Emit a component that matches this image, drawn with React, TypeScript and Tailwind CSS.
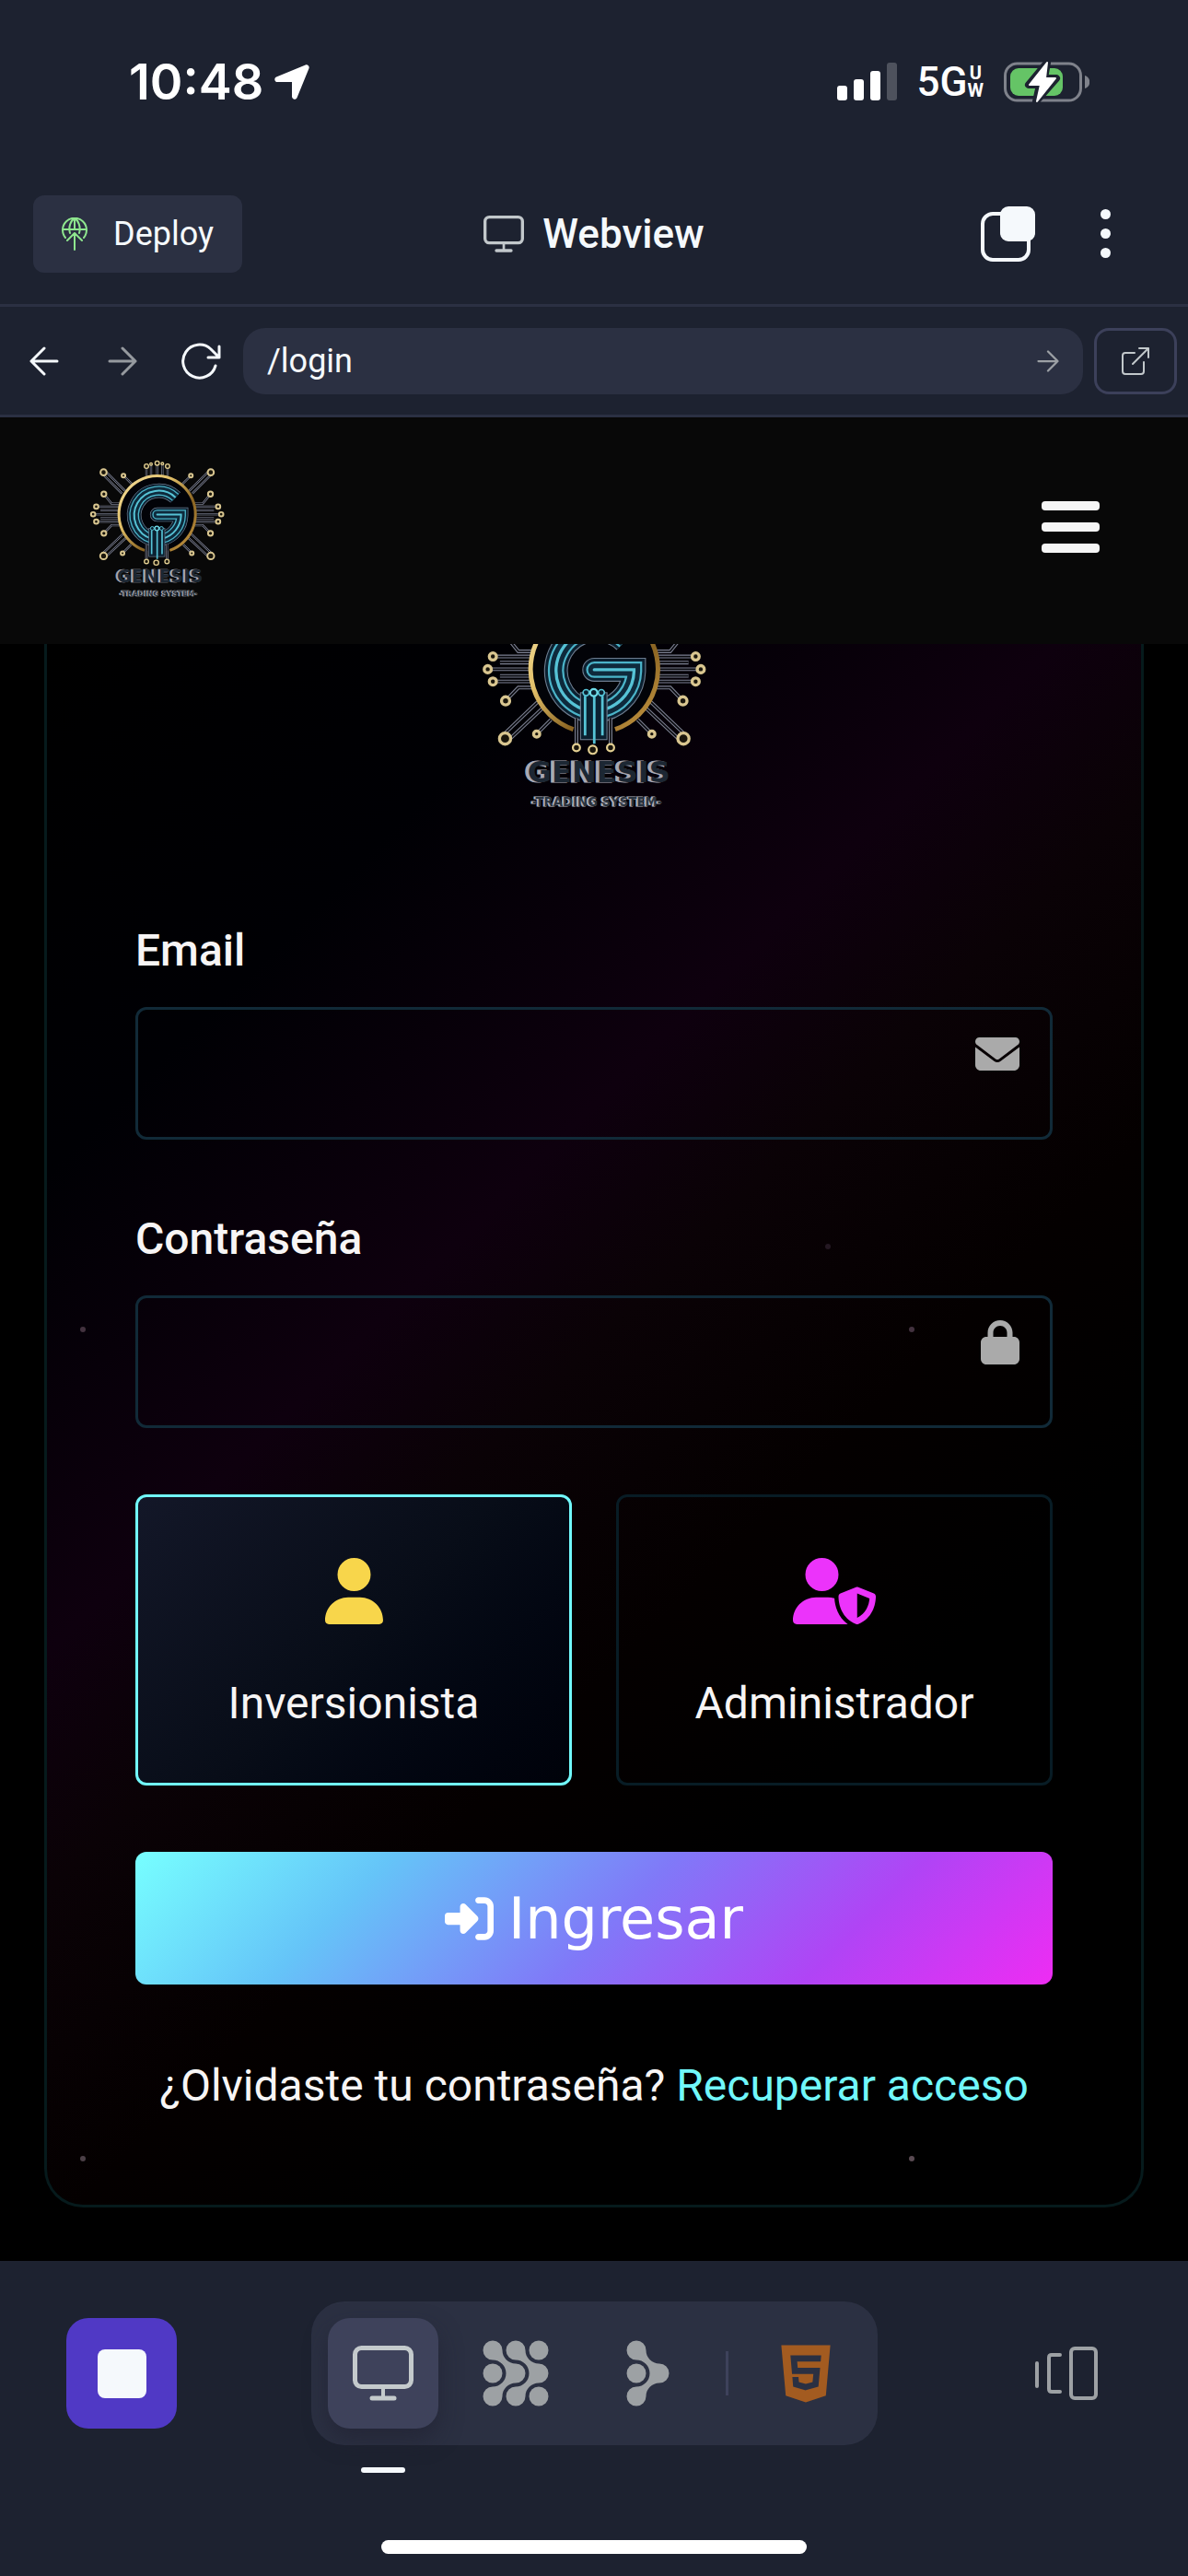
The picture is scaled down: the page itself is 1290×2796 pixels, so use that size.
import { useId, useState } from "react";
import type { ReactNode } from "react";
import { FaEnvelope, FaHtml5, FaLocationArrow, FaLock, FaRightToBracket, FaUser, FaUserShield } from "react-icons/fa6";

const SIDE_NODES = [
  [156, 129, 10],
  [221, 140, 6],
  [157, 200, 8],
  [132, 241, 7],
  [122, 266, 7],
  [132, 290, 7],
  [157, 328, 8],
  [156, 402, 11],
  [218, 393, 6],
];

const SIDE_TRACES = [
  "M158 121L226 189",
  "M152 134L216 198",
  "M221 140L250 169",
  "M157 200L182 231H208",
  "M132 241H206",
  "M146 253H206",
  "M122 266H203",
  "M146 279H206",
  "M132 290H206",
  "M157 328L182 302H208",
  "M151 396L220 330",
  "M162 406L232 340",
  "M218 393L246 365",
];

const CENTER_NODES = [
  [296, 109, 7],
  [311, 102, 4],
  [331, 99, 7],
  [348, 101, 4],
  [365, 109, 7],
  [296, 420, 7],
  [328, 424, 8],
  [363, 420, 7],
];

const CENTER_TRACES = ["M296 112V142", "M311 104V140", "M331 103V138", "M348 103V140", "M365 112V142", "M296 360V414", "M363 360V414"];

function Trace({ d }: { d: string }) {
  return (
    <>
      <path d={d} stroke="#7b7f90" strokeWidth="7" />
      <path d={d} stroke="#08090d" strokeWidth="3" />
    </>
  );
}

function Neon({ d, cap }: { d: string; cap: "round" | "butt" }) {
  return (
    <g strokeLinecap={cap} strokeLinejoin="miter">
      <path d={d} stroke="#6d7c8f" strokeWidth="47" />
      <path d={d} stroke="#0b2030" strokeWidth="43" />
      <path d={d} stroke="#4bb4c9" strokeWidth="32" />
      <path d={d} stroke="#0e2a3c" strokeWidth="24" />
      <path d={d} stroke="#56c3d6" strokeWidth="6" />
    </g>
  );
}

function GenesisLogo({ className }: { className: string }) {
  const gold = useId();
  const side = (
    <>
      {SIDE_TRACES.map((d) => (
        <Trace key={d} d={d} />
      ))}
      {SIDE_NODES.map(([x, y, r]) => (
        <circle key={`${x}-${y}`} cx={x} cy={y} r={r} fill="#1a160c" stroke="#d9c690" strokeWidth="6" />
      ))}
    </>
  );
  return (
    <svg viewBox="110 85 441 460" className={className} fill="none" role="img" aria-label="Genesis Trading System">
      <defs>
        <linearGradient id={gold} x1="0" y1="0" x2="1" y2="1">
          <stop offset="0" stopColor="#f3dfa0" />
          <stop offset="0.35" stopColor="#e2c069" />
          <stop offset="0.65" stopColor="#8a6422" />
          <stop offset="1" stopColor="#c99a45" />
        </linearGradient>
      </defs>
      {side}
      <g transform="translate(662 0) scale(-1 1)">{side}</g>
      {CENTER_TRACES.map((d) => (
        <Trace key={d} d={d} />
      ))}
      <circle cx="331" cy="266" r="124" fill="#020308" />
      <path d="M290 384A125 125 0 1 1 372 384" stroke={`url(#${gold})`} strokeWidth="9" />
      <Neon d="M391 211A80 80 0 1 0 314 346" cap="butt" />
      <Neon d="M331 267H409V270A80 80 0 0 1 350 345" cap="round" />
      <rect x="304" y="312" width="52" height="92" fill="#0b2030" stroke="#6d7c8f" strokeWidth="2" />
      <path d="M313 318V396M331 318V412M347 318V396" stroke="#56c3d6" strokeWidth="5" />
      <circle cx="315" cy="312" r="6" fill="#0b2030" stroke="#56c3d6" strokeWidth="3" />
      <circle cx="345" cy="312" r="6" fill="#0b2030" stroke="#56c3d6" strokeWidth="3" />
      <circle cx="330" cy="312" r="7" fill="#0b2030" stroke="#6fdbe8" strokeWidth="4" />
      <path d="M296 362V414M363 362V414" stroke="#7b7f90" strokeWidth="7" />
      <path d="M296 362V414M363 362V414" stroke="#08090d" strokeWidth="3" />
      {CENTER_NODES.map(([x, y, r]) => (
        <circle key={`${x}-${y}`} cx={x} cy={y} r={r} fill="#1a160c" stroke="#e3cf92" strokeWidth="4" />
      ))}
      <g fontFamily="'DejaVu Sans', sans-serif" fontWeight="700" textAnchor="middle">
        <text x="334" y="488" fontSize="58" fill="#a9aab4" stroke="#a9aab4" strokeWidth="2">
          GENESIS
        </text>
        <text x="340" y="487" fontSize="58" fill="#1c2733">
          GENESIS
        </text>
        <text x="334" y="534" fontSize="24" fill="#b0b1ba" stroke="#b0b1ba" strokeWidth="2">
          -TRADING SYSTEM-
        </text>
        <text x="337" y="534" fontSize="24" fill="#2a3440">
          -TRADING SYSTEM-
        </text>
      </g>
    </svg>
  );
}

function MonitorIcon({ className }: { className: string }) {
  return (
    <svg viewBox="0 0 66 60" className={className} fill="none" stroke="currentColor" strokeWidth="5" aria-hidden="true">
      <rect x="2.5" y="2.5" width="61" height="42" rx="7" />
      <path d="M33 45V56" strokeWidth="4" />
      <path d="M21 57H45" strokeLinecap="round" />
    </svg>
  );
}

function ArrowIcon({ className }: { className: string }) {
  return (
    <svg viewBox="0 0 32 32" className={className} fill="none" stroke="currentColor" strokeWidth="3" strokeLinecap="round" strokeLinejoin="round" aria-hidden="true">
      <path d="M2 16H30M16 2L30 16L16 30" />
    </svg>
  );
}

const CHEVRON =
  "M11 .5A10.5 10.5 0 0 1 21.5 11C21.5 19 28 25.5 36 25.5A10.5 10.5 0 0 1 36 46.5C28 46.5 21.5 53 21.5 61A10.5 10.5 0 1 1 11 50.5A14.5 14.5 0 0 0 11 21.5A10.5 10.5 0 0 1 11 .5Z";

function StatusBar() {
  return (
    <div className="flex h-[177px] items-center justify-between pl-[140px] pr-[107px] text-white">
      <div className="flex items-center gap-2">
        <span className="font-['Inter',sans-serif] text-[54px] leading-none font-semibold">10:48</span>
        <FaLocationArrow className="size-[46px]" aria-hidden="true" />
      </div>
      <div className="flex items-center gap-[22px]">
        <svg viewBox="0 0 65 41" className="h-[41px] w-[65px]" fill="currentColor" aria-hidden="true">
          <rect y="25" width="11" height="16" rx="3" />
          <rect x="18" y="18" width="11" height="23" rx="3" />
          <rect x="36" y="9" width="11" height="32" rx="3" />
          <rect x="54" width="11" height="41" rx="3" opacity="0.22" />
        </svg>
        <div className="flex items-center font-['Roboto',sans-serif] font-medium">
          <span className="text-[44px] leading-none">5G</span>
          <span className="flex flex-col text-center font-['Roboto',sans-serif] text-[20px] leading-[19px] font-bold">
            <span>U</span>
            <span>W</span>
          </span>
        </div>
        <svg viewBox="0 0 93 46" className="h-[46px] w-[93px]" fill="none" aria-hidden="true">
          <rect x="1.5" y="3" width="82" height="40" rx="13" stroke="#7f828b" strokeWidth="3" />
          <path d="M88 16C95 18 95 28 88 30Z" fill="#7f828b" />
          <rect x="7" y="8" width="57" height="30" rx="9" fill="#65c466" />
          <path d="M47 2L27 26H39L35 44L57 19H44Z" fill="#fff" stroke="#1d2230" strokeWidth="8" strokeLinejoin="round" />
          <path d="M47 2L28 26H40L36 44L56 19H45Z" fill="#fff" stroke="#fff" strokeWidth="2" strokeLinejoin="round" />
        </svg>
      </div>
    </div>
  );
}

function TitleBar() {
  return (
    <div className="grid h-[156px] grid-cols-[1fr_auto_1fr] items-center border-b-3 border-[#2b3043] pr-[84px] pl-9 text-[#f5f9fc]">
      <button className="flex h-[84px] items-center gap-7 justify-self-start rounded-xl bg-[#2b3042] pr-[31px] pl-[31px] text-4xl">
        <svg viewBox="0 0 28 36" className="h-9 w-7" fill="none" stroke="#8ee68e" strokeWidth="2" strokeLinecap="round" strokeLinejoin="round" aria-hidden="true">
          <path d="M4 22A13 13 0 1 1 24 22M1 13H27" />
          <path d="M9 17C7 10 10 3 14 1C18 3 21 10 19 17" />
          <path d="M14 1V13M14 35V18M6 25L14 17L22 25" />
        </svg>
        Deploy
      </button>
      <h1 className="-mr-12 flex items-center gap-5 text-[44px] font-medium">
        <MonitorIcon className="h-10 w-11 text-[#c2c8cb]" />
        Webview
      </h1>
      <div className="flex items-center gap-[71px] justify-self-end">
        <button aria-label="Pestañas">
          <svg viewBox="0 0 60 60" className="size-[60px]" fill="none" aria-hidden="true">
            <rect x="3" y="8" width="50" height="50" rx="11" stroke="currentColor" strokeWidth="4" />
            <rect x="22" width="38" height="38" rx="9" fill="currentColor" />
          </svg>
        </button>
        <button aria-label="Más opciones" className="flex flex-col gap-[10px]">
          <span className="size-[11px] rounded-full bg-current" />
          <span className="size-[11px] rounded-full bg-current" />
          <span className="size-[11px] rounded-full bg-current" />
        </button>
      </div>
    </div>
  );
}

function AddressBar() {
  return (
    <div className="flex h-[120px] items-center border-b-3 border-[#2b3043] pr-3 pl-8 text-[#f5f9fc]">
      <button aria-label="Atrás">
        <ArrowIcon className="size-8 rotate-180" />
      </button>
      <button aria-label="Adelante" className="ml-[53px] text-[#969a9f]">
        <ArrowIcon className="size-8" />
      </button>
      <button aria-label="Recargar" className="ml-[47px]">
        <svg viewBox="0 0 44 40" className="h-10 w-11" fill="none" stroke="currentColor" strokeWidth="3" strokeLinecap="round" strokeLinejoin="round" aria-hidden="true">
          <path d="M38 25A18 18 0 1 1 33 7L42 16M42 4V16H30" />
        </svg>
      </button>
      <form className="ml-6 flex h-[72px] flex-1 items-center rounded-3xl bg-[#2b3042] pr-[26px] pl-[26px]">
        <input aria-label="Dirección" defaultValue="/login" className="min-w-0 flex-1 bg-transparent text-4xl outline-none" />
        <button type="button" aria-label="Ir" className="text-[#9ca0a5]">
          <ArrowIcon className="size-6" />
        </button>
      </form>
      <button aria-label="Abrir en otra ventana" className="ml-3 flex h-[72px] w-[90px] items-center justify-center rounded-2xl border-3 border-[#3c405a] text-[#c2c8cb]">
        <svg viewBox="0 0 30 30" className="size-[30px]" fill="none" stroke="currentColor" strokeWidth="2" strokeLinecap="round" strokeLinejoin="round" aria-hidden="true">
          <path d="M14 6H4Q1 6 1 9V26Q1 29 4 29H21Q24 29 24 26V16M12 18L29 1M19 1H29V11" />
        </svg>
      </button>
    </div>
  );
}

function Field({ id, label, type, icon }: { id: string; label: string; type: string; icon: ReactNode }) {
  return (
    <div>
      <label htmlFor={id} className="block text-5xl leading-[72px] font-medium">
        {label}
      </label>
      <div className="relative mt-[25px]">
        <input id={id} type={type} className="block h-36 w-full rounded-xl border-3 border-[#112a38] bg-transparent pr-28 pl-9 text-5xl outline-none" />
        <span className="pointer-events-none absolute top-[27px] right-9 text-[#aaaaaa]">{icon}</span>
      </div>
    </div>
  );
}

function Role({ label, icon, checked, onSelect }: { label: string; icon: ReactNode; checked: boolean; onSelect: () => void }) {
  return (
    <label
      className={
        checked
          ? "relative flex flex-1 flex-col items-center gap-[50px] rounded-xl border-3 border-[#71f8fb] bg-linear-135 from-[#131728] via-[#080d18] to-[#00020a] pt-[66px] pb-[50px]"
          : "relative flex flex-1 flex-col items-center gap-[50px] rounded-xl border-3 border-[#081c25] pt-[66px] pb-[50px]"
      }
    >
      <input type="radio" name="role" checked={checked} onChange={onSelect} className="sr-only" />
      {icon}
      <span className="text-5xl leading-[72px]">{label}</span>
    </label>
  );
}

/* Specks of the starfield drawn behind the form. */
const STARS = [
  "top-[651px] left-[845px] bg-[#241822]",
  "top-[741px] left-[36px] bg-[#43323f]",
  "top-[741px] left-[936px] bg-[#43323f]",
  "top-[1641px] left-[36px] bg-[#4c4047]",
  "top-[1641px] left-[936px] bg-[#5a4b53]",
];

function LoginCard() {
  const [role, setRole] = useState("investor");
  return (
    <section className="relative mx-12 flex flex-col rounded-b-[42px] border-x-3 border-b-3 border-[#061a1c] bg-[linear-gradient(135deg,#000000_0%,#000004_20%,#0e000e_38%,#0a0206_47%,#040000_60%,#000000_72%)] px-24 pb-[93px] text-[#f7f5f5]">
      {STARS.map((place) => (
        <span key={place} className={`absolute size-[6px] rounded-full ${place}`} />
      ))}
      <GenesisLogo className="-mt-[73px] h-[255px] w-[244px] self-center" />
      <form className="mt-[115px] flex flex-col gap-[72px]" onSubmit={(e) => e.preventDefault()}>
        <Field id="email" label="Email" type="email" icon={<FaEnvelope className="size-12" />} />
        <Field id="password" label="Contraseña" type="password" icon={<FaLock className="h-12 w-[42px]" />} />
        <div className="flex gap-12">
          <Role
            label="Inversionista"
            icon={<FaUser className="h-[72px] w-[63px] text-[#f8d64b]" />}
            checked={role === "investor"}
            onSelect={() => setRole("investor")}
          />
          <Role
            label="Administrador"
            icon={<FaUserShield className="h-[72px] w-[90px] text-[#ec33fb]" />}
            checked={role === "admin"}
            onSelect={() => setRole("admin")}
          />
        </div>
        <button className="flex h-36 items-center justify-center gap-4 rounded-xl bg-[linear-gradient(135deg,#77ffff_0%,#65c4f8_25%,#8079f8_52%,#b044f5_76%,#ee2cf3_100%)] font-['DejaVu_Sans',sans-serif] text-[62px] text-white">
          <FaRightToBracket className="size-[53px]" aria-hidden="true" />
          Ingresar
        </button>
      </form>
      <p className="mt-[74px] text-center text-5xl leading-[72px]">
        ¿Olvidaste tu contraseña?{" "}
        <a href="#recuperar" className="text-[#71f8fb]">
          Recuperar acceso
        </a>
      </p>
    </section>
  );
}

function BottomBar() {
  return (
    <footer className="flex flex-col items-center bg-[#1d2230] pt-11 pb-6">
      <div className="grid w-full grid-cols-[1fr_auto_1fr] items-center pr-[98px] pl-[72px] text-[#9da1a4]">
        <button aria-label="Detener" className="flex size-[120px] items-center justify-center rounded-3xl bg-[#5039c5]">
          <span className="size-[53px] rounded-lg bg-[#f5f9fc]" />
        </button>
        <nav className="ml-[26px] flex items-center gap-6 rounded-[36px] bg-[#2b3042] p-[18px]">
          <button aria-label="Webview" className="flex size-[120px] items-center justify-center rounded-3xl bg-[#3e425b] text-[#c4cacc] shadow-[0_12px_24px_rgba(30,30,45,0.5)]">
            <MonitorIcon className="h-[60px] w-[66px]" />
          </button>
          <button aria-label="Agente" className="flex size-[120px] items-center justify-center">
            <svg viewBox="0 0 72 72" className="size-[72px]" fill="currentColor" aria-hidden="true">
              <path d={CHEVRON} />
              <path d={CHEVRON} transform="translate(25 0)" />
              <circle cx="11" cy="36" r="10.5" />
              <circle cx="61" cy="11" r="10.5" />
              <circle cx="61" cy="61" r="10.5" />
            </svg>
          </button>
          <button aria-label="Asistente" className="flex size-[120px] items-center justify-center">
            <svg viewBox="0 0 47 72" className="h-[72px] w-[47px]" fill="currentColor" aria-hidden="true">
              <path d={CHEVRON} />
              <circle cx="11" cy="36" r="10.5" />
            </svg>
          </button>
          <span className="h-12 w-[3px] bg-[#3e425b]" />
          <button aria-label="HTML" className="flex size-[120px] items-center justify-center text-[#a35b20]">
            <FaHtml5 className="h-[71px] w-[54px]" />
          </button>
        </nav>
        <button aria-label="Paneles" className="justify-self-end">
          <svg viewBox="0 0 68 58" className="h-[58px] w-[68px]" fill="none" stroke="currentColor" strokeWidth="4" strokeLinecap="round" aria-hidden="true">
            <path d="M2 18V43M27 9H18Q15 9 15 12V46Q15 49 18 49H27" />
            <rect x="39" y="2" width="27" height="54" rx="4" />
          </svg>
        </button>
      </div>
      <span className="mt-6 mr-[458px] h-[6px] w-12 rounded-full bg-[#f5f9fc]" />
      <span className="mt-[73px] h-[15px] w-[462px] rounded-full bg-white" />
    </footer>
  );
}

export default function App() {
  return (
    <div className="flex min-h-screen flex-col bg-black font-['Roboto',sans-serif]">
      <div className="bg-[#1d2230]">
        <StatusBar />
        <TitleBar />
        <AddressBar />
      </div>
      <main className="flex-1 overflow-hidden">
        <header className="relative z-10 flex h-[246px] items-center justify-between bg-[#080808] pr-24 pb-1 pl-[97px]">
          <GenesisLogo className="h-[153px] w-[147px]" />
          <button aria-label="Menú" className="flex w-[63px] flex-col gap-[13px] pb-1">
            <span className="h-[10px] rounded-[4px] bg-[#f5f5f5]" />
            <span className="h-[10px] rounded-[4px] bg-[#f5f5f5]" />
            <span className="h-[10px] rounded-[4px] bg-[#f5f5f5]" />
          </button>
        </header>
        <LoginCard />
      </main>
      <BottomBar />
    </div>
  );
}
